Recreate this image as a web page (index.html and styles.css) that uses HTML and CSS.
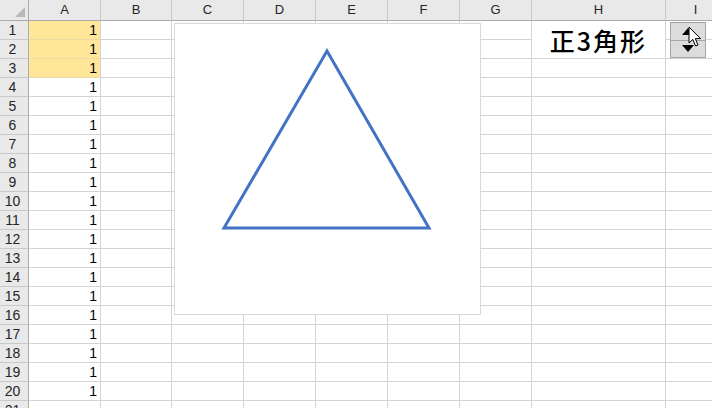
FILE: index.html
```html
<!DOCTYPE html>
<html lang="ja">
<head>
<meta charset="utf-8">
<title>正3角形</title>
<link rel="stylesheet" href="styles.css">
</head>
<body>
<div class="sheet">
  <div class="grid">
    <div class="corner"><span class="corner-tri"></span></div>
    <div class="ch">A</div><div class="ch">B</div><div class="ch">C</div><div class="ch">D</div><div class="ch">E</div><div class="ch">F</div><div class="ch">G</div><div class="ch">H</div><div class="ch">I</div>

    <div class="rh">1</div><div class="c num sel">1</div><div class="c"></div><div class="c"></div><div class="c"></div><div class="c"></div><div class="c"></div><div class="c"></div><div class="c merged">正3角形</div><div class="c"></div>
    <div class="rh">2</div><div class="c num sel">1</div><div class="c"></div><div class="c"></div><div class="c"></div><div class="c"></div><div class="c"></div><div class="c"></div><div class="c"></div>
    <div class="rh">3</div><div class="c num sel">1</div><div class="c"></div><div class="c"></div><div class="c"></div><div class="c"></div><div class="c"></div><div class="c"></div><div class="c"></div><div class="c"></div>
    <div class="rh">4</div><div class="c num">1</div><div class="c"></div><div class="c"></div><div class="c"></div><div class="c"></div><div class="c"></div><div class="c"></div><div class="c"></div><div class="c"></div>
    <div class="rh">5</div><div class="c num">1</div><div class="c"></div><div class="c"></div><div class="c"></div><div class="c"></div><div class="c"></div><div class="c"></div><div class="c"></div><div class="c"></div>
    <div class="rh">6</div><div class="c num">1</div><div class="c"></div><div class="c"></div><div class="c"></div><div class="c"></div><div class="c"></div><div class="c"></div><div class="c"></div><div class="c"></div>
    <div class="rh">7</div><div class="c num">1</div><div class="c"></div><div class="c"></div><div class="c"></div><div class="c"></div><div class="c"></div><div class="c"></div><div class="c"></div><div class="c"></div>
    <div class="rh">8</div><div class="c num">1</div><div class="c"></div><div class="c"></div><div class="c"></div><div class="c"></div><div class="c"></div><div class="c"></div><div class="c"></div><div class="c"></div>
    <div class="rh">9</div><div class="c num">1</div><div class="c"></div><div class="c"></div><div class="c"></div><div class="c"></div><div class="c"></div><div class="c"></div><div class="c"></div><div class="c"></div>
    <div class="rh">10</div><div class="c num">1</div><div class="c"></div><div class="c"></div><div class="c"></div><div class="c"></div><div class="c"></div><div class="c"></div><div class="c"></div><div class="c"></div>
    <div class="rh">11</div><div class="c num">1</div><div class="c"></div><div class="c"></div><div class="c"></div><div class="c"></div><div class="c"></div><div class="c"></div><div class="c"></div><div class="c"></div>
    <div class="rh">12</div><div class="c num">1</div><div class="c"></div><div class="c"></div><div class="c"></div><div class="c"></div><div class="c"></div><div class="c"></div><div class="c"></div><div class="c"></div>
    <div class="rh">13</div><div class="c num">1</div><div class="c"></div><div class="c"></div><div class="c"></div><div class="c"></div><div class="c"></div><div class="c"></div><div class="c"></div><div class="c"></div>
    <div class="rh">14</div><div class="c num">1</div><div class="c"></div><div class="c"></div><div class="c"></div><div class="c"></div><div class="c"></div><div class="c"></div><div class="c"></div><div class="c"></div>
    <div class="rh">15</div><div class="c num">1</div><div class="c"></div><div class="c"></div><div class="c"></div><div class="c"></div><div class="c"></div><div class="c"></div><div class="c"></div><div class="c"></div>
    <div class="rh">16</div><div class="c num">1</div><div class="c"></div><div class="c"></div><div class="c"></div><div class="c"></div><div class="c"></div><div class="c"></div><div class="c"></div><div class="c"></div>
    <div class="rh">17</div><div class="c num">1</div><div class="c"></div><div class="c"></div><div class="c"></div><div class="c"></div><div class="c"></div><div class="c"></div><div class="c"></div><div class="c"></div>
    <div class="rh">18</div><div class="c num">1</div><div class="c"></div><div class="c"></div><div class="c"></div><div class="c"></div><div class="c"></div><div class="c"></div><div class="c"></div><div class="c"></div>
    <div class="rh">19</div><div class="c num">1</div><div class="c"></div><div class="c"></div><div class="c"></div><div class="c"></div><div class="c"></div><div class="c"></div><div class="c"></div><div class="c"></div>
    <div class="rh">20</div><div class="c num">1</div><div class="c"></div><div class="c"></div><div class="c"></div><div class="c"></div><div class="c"></div><div class="c"></div><div class="c"></div><div class="c"></div>
    <div class="rh">21</div><div class="c"></div><div class="c"></div><div class="c"></div><div class="c"></div><div class="c"></div><div class="c"></div><div class="c"></div><div class="c"></div><div class="c"></div>
  </div>

  <div class="chart">
    <svg class="chart-svg" width="305" height="290" viewBox="0 0 305 290">
      <polygon points="152,27 49,204 254,204" fill="none" stroke="#4472c4" stroke-width="3" stroke-linejoin="miter"/>
    </svg>
  </div>

  <div class="spin">
    <div class="spin-btn"><svg width="12" height="7" viewBox="0 0 12 7"><polygon points="6,0 12,7 0,7" fill="#000"/></svg></div>
    <div class="spin-btn"><svg width="12" height="7" viewBox="0 0 12 7"><polygon points="0,0 12,0 6,7" fill="#000"/></svg></div>
  </div>

  <svg class="cursor" width="14" height="22" viewBox="0 0 14 22">
    <path d="M1 1 L1 17 L4.8 13.4 L7.6 20 L10 19 L7.3 12.6 L12.5 12.6 Z" fill="#fff" stroke="#000" stroke-width="1" stroke-linejoin="miter"/>
  </svg>
</div>
</body>
</html>
```

FILE: styles.css
```css
* { box-sizing: border-box; }

html, body {
  margin: 0;
  padding: 0;
  background: #ffffff;
  overflow: hidden;
}

.sheet {
  position: relative;
  width: 712px;
  height: 408px;
  overflow: hidden;
  font-family: "Liberation Sans", Arial, sans-serif;
}

.grid {
  display: grid;
  grid-template-columns: 29px 72px 71px 72px 72px 72px 72px 72px 134px 60px;
  grid-template-rows: 21px repeat(21, 19px);
}

.corner {
  position: relative;
  background: #e9e9e9;
  border-right: 1px solid #ababab;
  border-bottom: 1px solid #ababab;
}

.corner-tri {
  position: absolute;
  right: 3px;
  bottom: 3px;
  width: 0;
  height: 0;
  border-left: 10px solid transparent;
  border-bottom: 10px solid #b9b9b9;
}

.ch {
  background: #e9e9e9;
  border-right: 1px solid #c9c9c9;
  border-bottom: 1px solid #ababab;
  color: #262626;
  font-size: 13px;
  line-height: 20px;
  text-align: center;
}

.rh {
  background: #e9e9e9;
  border-right: 1px solid #ababab;
  border-bottom: 1px solid #c9c9c9;
  color: #262626;
  font-size: 14px;
  line-height: 18px;
  text-align: center;
  padding-right: 3px;
}

.c {
  border-right: 1px solid #d4d4d4;
  border-bottom: 1px solid #d4d4d4;
  font-size: 14px;
  line-height: 18px;
  color: #000;
}

.num {
  text-align: right;
  padding-right: 3px;
}

.sel {
  background: #ffe699;
  border-bottom-color: #ecdba6;
}

.merged {
  grid-row: span 2;
  display: flex;
  align-items: center;
  justify-content: center;
  font-family: "Noto Sans CJK JP", "Noto Sans", sans-serif;
  font-size: 25px;
  font-weight: 500;
  letter-spacing: 2px;
  color: #000;
  padding-top: 1px;
}

.chart {
  position: absolute;
  left: 174px;
  top: 23px;
  width: 307px;
  height: 292px;
  background: #fff;
  border: 1px solid #d9d9d9;
}

.chart-svg {
  display: block;
}

.spin {
  position: absolute;
  left: 670px;
  top: 22px;
  width: 36px;
  height: 36px;
  display: flex;
  flex-direction: column;
  border: 1px solid #a6a6a6;
  background: #dcdcdc;
}

.spin-btn {
  flex: 1;
  display: flex;
  align-items: center;
  justify-content: center;
}

.spin-btn + .spin-btn {
  border-top: 1px solid #a6a6a6;
}

.spin-btn svg {
  display: block;
}

.cursor {
  position: absolute;
  left: 688px;
  top: 26px;
}
```
